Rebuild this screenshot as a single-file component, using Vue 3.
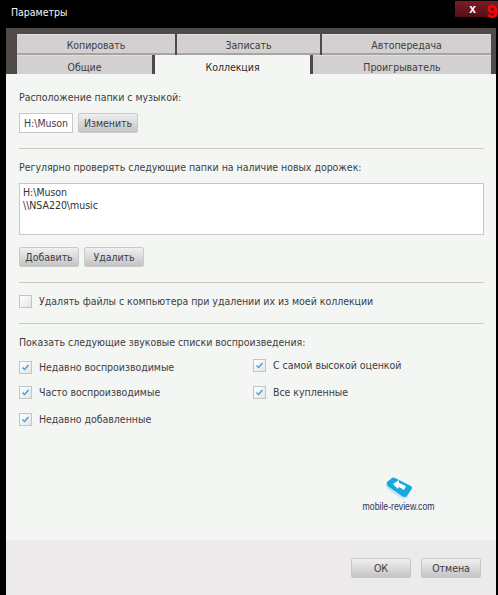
<script setup>
const tabsTop = [
  { label: 'Копировать', w: 158 },
  { label: 'Записать', w: 143 },
  { label: 'Автопередача', w: 169 },
]
const tabsBottom = [
  { label: 'Общие', w: 135 },
  { label: 'Коллекция', w: 155, active: true },
  { label: 'Проигрыватель', w: 178 },
]
const left = ['Недавно воспроизводимые', 'Часто воспроизводимые', 'Недавно добавленные']
const right = ['С самой высокой оценкой', 'Все купленные']
</script>

<template>
  <div class="window">
    <header class="titlebar">
      <span class="title">Параметры</span>
      <button class="close">x</button>
      <span class="red">9</span>
    </header>
    <div class="panel">
      <nav class="tabs">
        <div class="tabrow top">
          <div v-for="t in tabsTop" :key="t.label" class="tab" :style="{ width: t.w + 'px' }">{{ t.label }}</div>
        </div>
        <div class="tabrow bottom">
          <div v-for="t in tabsBottom" :key="t.label" class="tab" :class="{ active: t.active }" :style="{ width: t.w + 'px' }">{{ t.label }}</div>
        </div>
      </nav>
      <main class="content">
        <p class="label first">Расположение папки с музыкой:</p>
        <div class="row r1">
          <div class="field">H:\Muson</div>
          <button class="btn">Изменить</button>
        </div>
        <hr class="sep s1" />
        <p class="label l2">Регулярно проверять следующие папки на наличие новых дорожек:</p>
        <div class="list">
          <div>H:\Muson</div>
          <div>\\NSA220\music</div>
        </div>
        <div class="row r2">
          <button class="btn">Добавить</button>
          <button class="btn">Удалить</button>
        </div>
        <hr class="sep s2" />
        <label class="check single"><span class="box"></span>Удалять файлы с компьютера при удалении их из моей коллекции</label>
        <hr class="sep s3" />
        <p class="label l3">Показать следующие звуковые списки воспроизведения:</p>
        <div class="columns">
          <div class="col cleft">
            <label v-for="c in left" :key="c" class="check">
              <span class="box"><svg width="13" height="13" viewBox="0 0 13 13"><path d="M3 6.5 L5.4 9 L10 3.6" fill="none" stroke="#2f9fdc" stroke-width="1.6"/></svg></span>{{ c }}
            </label>
          </div>
          <div class="col cright">
            <label v-for="c in right" :key="c" class="check">
              <span class="box"><svg width="13" height="13" viewBox="0 0 13 13"><path d="M3 6.5 L5.4 9 L10 3.6" fill="none" stroke="#2f9fdc" stroke-width="1.6"/></svg></span>{{ c }}
            </label>
          </div>
        </div>
        <div class="logo">
          <svg width="30" height="24" viewBox="0 0 30 24">
            <path d="M1 8 Q2 12 6 15 L17 22 Q22 24 25 20 L20 20 L4 9 Z" fill="#c4e5f4"/>
            <path d="M3 6 L8 2 Q9 1 11 2 L27 10 Q29 12 27 14 L23 20 Q21 22 18 20 L5 11 Q2 9 3 6 Z" fill="#17a8e2"/>
            <path d="M9 8 L15 4 L15 7 L22 10 L20 14 L15 11 L14 13 Z" fill="#fff"/>
          </svg>
          <span>mobile-review.com</span>
        </div>
      </main>
      <footer class="footer">
        <button class="btn">ОК</button>
        <button class="btn">Отмена</button>
      </footer>
    </div>
  </div>
</template>

<style>
html, body { margin: 0; background: #000; }
</style>

<style scoped>
.window {
  position: relative;
  width: 498px;
  height: 595px;
  background: #000;
  overflow: hidden;
  font-family: "DejaVu Sans", sans-serif;
  font-stretch: condensed;
  font-size: 10.5px;
  letter-spacing: -0.03px;
  color: #3d3d3f;
}
.titlebar {
  height: 28px;
  box-sizing: border-box;
  padding: 0 0 0 11px;
  position: relative;
  display: flex;
  align-items: center;
}
.title { color: #f6f6f6; margin-top: -4px; }
.close {
  position: absolute;
  left: 455px;
  top: 1px;
  width: 43px;
  height: 16px;
  border: 0;
  padding: 0 8px 0 0;
  color: #fff;
  font: bold 12px/14px "Liberation Sans", sans-serif;
  background: linear-gradient(#7b1c24, #54101a);
}
.red {
  position: absolute;
  left: 486px;
  top: 3px;
  color: #f00;
  font: bold 20px/20px "Liberation Mono", monospace;
}
.panel {
  width: 490px;
  margin-left: 6px;
  height: 567px;
  display: flex;
  flex-direction: column;
  background: #f4f6f3;
}
.tabs {
  height: 46px;
  box-sizing: border-box;
  padding: 6px 5px 0 11px;
  background: #4f4a47;
}
.tabrow { display: flex; }
.tabrow.top { height: 21px; gap: 2px; }
.tabrow.bottom { height: 19px; gap: 3px; }
.tab {
  box-sizing: border-box;
  display: flex;
  align-items: center;
  justify-content: center;
  background: #d3d0d2;
  border-bottom: 2px solid #a8a3a1;
  border-top: 1px solid #e0dee0;
  padding-top: 2px;
  color: #3d3d40;
}
.tabrow.bottom .tab { border-bottom: 0; padding-top: 3px; }
.tab.active { background: #f4f6f3; border-top-color: #f4f6f3; color: #2a2a2c; }
.content {
  flex: 1;
  position: relative;
  box-sizing: border-box;
  padding: 0 13px;
}
.label { margin: 0; line-height: 15px; }
.first { margin-top: 16px; }
.row { display: flex; gap: 5px; }
.r1 { margin-top: 8px; }
.field {
  box-sizing: border-box;
  width: 54px;
  height: 20px;
  line-height: 18px;
  padding-left: 4px;
  background: #fff;
  border: 1px solid #c8c8c8;
}
.btn {
  box-sizing: border-box;
  width: 60px;
  height: 20px;
  padding: 0;
  border: 1px solid #c9c9c9;
  border-radius: 2px;
  background: linear-gradient(#f0f0f0, #c4c4c4);
  color: #3d3d3f;
  font: inherit;
  letter-spacing: inherit;
}
.sep { border: 0; height: 1px; background: #c9c9c7; margin: 0; width: 465px; }
.s1 { margin-top: 15px; }
.l2 { margin-top: 11px; }
.list {
  box-sizing: border-box;
  margin-top: 8px;
  width: 465px;
  height: 52px;
  padding: 2px 3px;
  line-height: 13px;
  background: #fff;
  border: 1px solid #c8c8c8;
  color: #2f2f31;
}
.r2 { margin-top: 12px; }
.s2 { margin-top: 15px; }
.check { display: flex; align-items: center; gap: 7px; height: 14px; line-height: 14px; }
.single { margin-top: 11px; }
.box {
  box-sizing: border-box;
  width: 13px;
  height: 13px;
  flex: none;
  background: linear-gradient(135deg, #fff, #e4e4e4);
  border: 1px solid #c4c4c4;
  display: flex;
  align-items: center;
  justify-content: center;
}
.s3 { margin-top: 15px; }
.l3 { margin-top: 11px; }
.columns { display: flex; margin-top: 10px; }
.col { display: flex; flex-direction: column; }
.cleft { width: 234px; margin-top: 0; gap: 11px; }
.cleft .check:last-child { margin-top: 2px; }
.cright { margin-top: -2px; gap: 13px; }
.logo {
  position: absolute;
  left: 356px;
  top: 402px;
  width: 74px;
  display: flex;
  flex-direction: column;
  align-items: center;
  color: #2d3358;
  font-family: "Liberation Sans", sans-serif;
  font-size: 11px;
  line-height: 12px;
  letter-spacing: 0;
  white-space: nowrap;
}
.logo span { transform: scaleX(0.79); }
.footer {
  height: 55px;
  box-sizing: border-box;
  background: #eceaeb;
  display: flex;
  justify-content: flex-end;
  gap: 10px;
  padding: 18px 15px 0 0;
}
</style>
